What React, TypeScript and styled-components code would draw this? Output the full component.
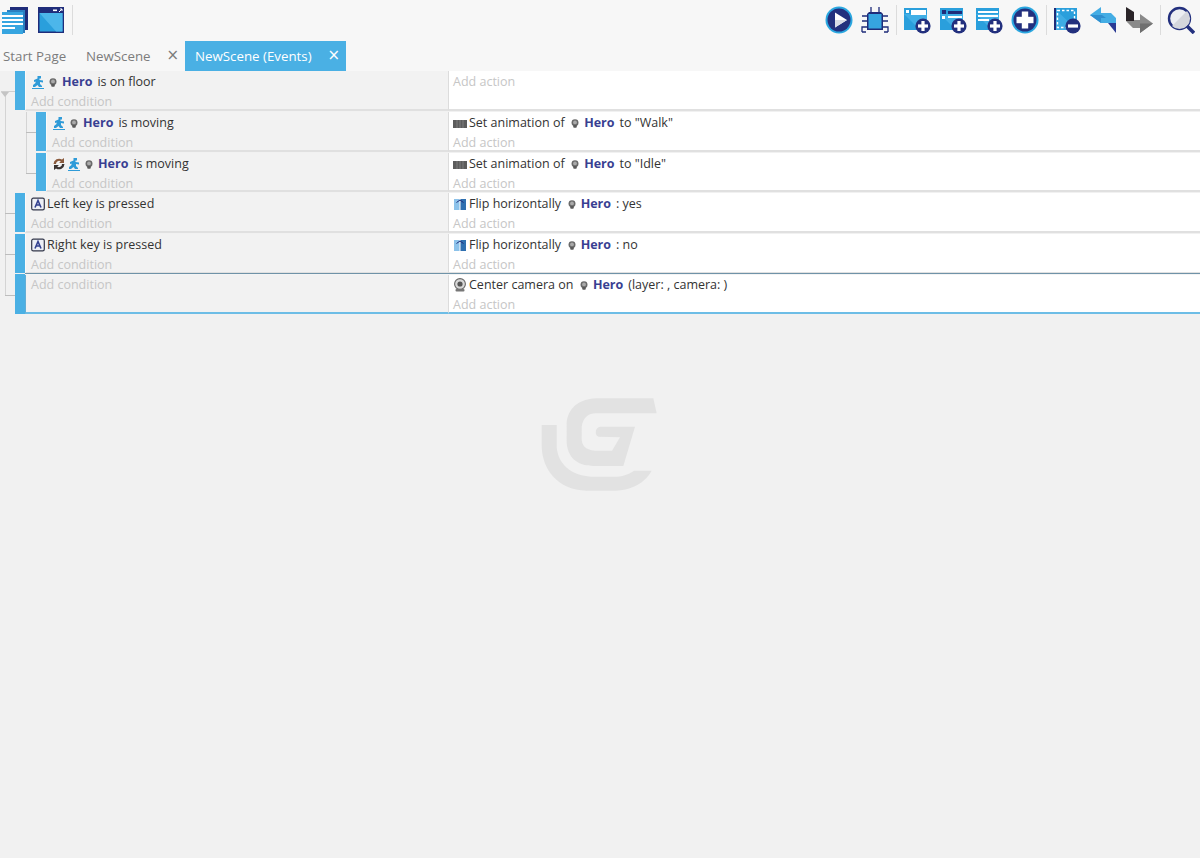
import React from "react";
import styled, { createGlobalStyle } from "styled-components";

const GlobalStyle = createGlobalStyle`
  html, body {
    margin: 0;
    padding: 0;
    background: #f1f1f1;
  }
  body {
    font-family: "Open Sans", "Noto Sans", "Liberation Sans", sans-serif;
    font-size: 12.5px;
    color: #333;
  }
`;

const Page = styled.div`
  position: relative;
  width: 1200px;
  height: 858px;
  overflow: hidden;
  display: flex;
  flex-direction: column;
`;

const Toolbar = styled.div`
  height: 41px;
  flex: none;
  background: #f7f7f7;
  display: flex;
  align-items: center;
  justify-content: space-between;
  padding: 0 5px 1px 1px;
  box-sizing: border-box;
`;

const ToolGroup = styled.div`
  display: flex;
  align-items: center;
  gap: 8px;
`;

const ToolIcon = styled.svg`
  width: 28px;
  height: 28px;
  display: block;
  flex: none;
`;

const ToolSeparator = styled.div`
  width: 1px;
  height: 30px;
  background: #dcdcdc;
  margin: 0 -1.5px;
`;

const TabBar = styled.div`
  height: 30px;
  flex: none;
  display: flex;
  background: #f7f7f7;
`;

const Tab = styled.div<{ $active?: boolean; $width: number }>`
  width: ${({ $width }) => $width}px;
  box-sizing: border-box;
  display: flex;
  align-items: center;
  justify-content: space-between;
  font-size: 13.3px;
  padding: ${({ $active }) => ($active ? "0 6px 0 10px" : "0 6px 0 3px")};
  color: ${({ $active }) => ($active ? "#fff" : "#7c7c7c")};
  background: ${({ $active }) => ($active ? "#4ab0e4" : "transparent")};
`;

const TabClose = styled.span`
  font-size: 15px;
  font-family: "DejaVu Sans", sans-serif;
  line-height: 1;
  margin-top: -2px;
`;

const EventList = styled.div`
  position: relative;
  flex: none;

  &::before {
    content: "";
    position: absolute;
    left: 5px;
    top: 25px;
    height: 199px;
    width: 1px;
    background: #d4d4d4;
  }
`;

const Marker = styled.div`
  position: absolute;
  left: 1px;
  top: 21px;
  width: 0;
  height: 0;
  border-left: 4px solid transparent;
  border-right: 4px solid transparent;
  border-top: 5px solid #c4c4c4;

  &::after {
    content: "";
    position: absolute;
    left: -4px;
    top: -6px;
    width: 14px;
    height: 1px;
    background: #cfcfcf;
  }
`;

const SubEvents = styled.div`
  position: relative;

  &::before {
    content: "";
    position: absolute;
    left: 26px;
    top: 0;
    height: 62px;
    width: 1px;
    background: #d4d4d4;
  }
`;

const Row = styled.div<{ $depth: number; $height: number; $branch?: boolean }>`
  position: relative;
  display: flex;
  height: ${({ $height }) => $height}px;
  padding-left: ${({ $depth }) => 15 + $depth * 21}px;

  &::before {
    content: ${({ $branch }) => ($branch ? '""' : "none")};
    position: absolute;
    left: ${({ $depth }) => ($depth ? 26 : 5)}px;
    top: 20px;
    width: 10px;
    height: 1px;
    background: #bdbdbd;
  }
`;

const Bar = styled.div<{ $selected?: boolean }>`
  width: 10px;
  flex: none;
  background: #4ab0e4;
  margin-bottom: ${({ $selected }) => ($selected ? 1 : 2)}px;
  margin-top: ${({ $selected }) => ($selected ? -1 : 0)}px;
`;

const Cell = styled.div<{ $selected?: boolean }>`
  box-sizing: border-box;
  height: calc(100% - 1px);
  padding: ${({ $selected }) => ($selected ? 0 : 1)}px 0 0 5px;
  line-height: 20px;
  border-bottom: ${({ $selected }) => ($selected ? "2px solid #6dbde6" : "2px solid #e0e0e0")};
  box-shadow: ${({ $selected }) => ($selected ? "0 -1px 0 0 #f4f4f4, 0 -2px 0 0 #6f93a8" : "none")};
`;

const Conditions = styled(Cell)<{ $selected?: boolean }>`
  flex: 1;
  background: #f2f2f2;
  border-left: 1px solid ${({ $selected }) => ($selected ? "#62aed6" : "#fafafa")};
`;

const Actions = styled(Cell)`
  width: 752px;
  flex: none;
  background: #fff;
  border-left: 1px solid #dcdcdc;
  padding-left: 4px;
`;

const Sentence = styled.div`
  display: flex;
  align-items: center;
  height: 20px;
  white-space: pre;
`;

const AddLink = styled.div`
  height: 20px;
  color: #c6c6c6;
`;

const HeroName = styled.b`
  color: #393f92;
  font-weight: 700;
  margin: 0 5px 0 5px;
`;

const SmallIcon = styled.svg<{ $gap?: number }>`
  width: 14px;
  height: 14px;
  flex: none;
  margin-right: ${({ $gap }) => $gap ?? 2}px;
`;

const HeadIcon = styled.svg`
  width: 8px;
  height: 9px;
  flex: none;
`;

const Watermark = styled.svg`
  position: absolute;
  left: 520px;
  top: 380px;
  width: 160px;
  height: 130px;
`;

const PlusBadge = ({ x = 20, y = 20 }: { x?: number; y?: number }) => (
  <g>
    <circle cx={x} cy={y} r="7.6" fill="#23307e" />
    <rect x={x - 5} y={y - 1.6} width="10" height="3.2" fill="#fff" />
    <rect x={x - 1.6} y={y - 5} width="3.2" height="10" fill="#fff" />
  </g>
);

const BlueWindow = ({ children }: { children?: React.ReactNode }) => (
  <g>
    <rect x="1" y="2" width="23" height="22" fill="#2a9fdc" />
    <path d="M1 8 L24 8 L24 24 L17 24 Z" fill="#4cb6ea" opacity="0.7" />
    {children}
  </g>
);

const toolIcons: Record<string, React.ReactNode> = {
  list: (
    <>
      <path d="M9 1 H27 V24 H22 V4 H9 Z" fill="#1f2c7a" />
      <path d="M6 4 H24 V27 H19 V7 H6 Z" fill="#2a7fc0" />
      <rect x="1" y="6" width="21" height="22" fill="#36a5e0" />
      <rect x="1" y="9" width="21" height="2" fill="#fff" />
      <rect x="1" y="13" width="21" height="2" fill="#fff" />
      <rect x="1" y="17" width="21" height="2" fill="#fff" />
      <rect x="1" y="21" width="13" height="2" fill="#fff" />
    </>
  ),
  window: (
    <>
      <rect x="1" y="1" width="26" height="26" fill="#1f2c7a" />
      <rect x="2.5" y="7" width="23" height="18.5" fill="#2a9fdc" />
      <path d="M2.5 7 H25.5 V25.5 H19 Z" fill="#4cb6ea" />
      <rect x="16" y="3.5" width="4" height="1.6" fill="#fff" />
      <path d="M22 6 L25 3 M23 3 H25 V5" stroke="#fff" strokeWidth="1" fill="none" />
    </>
  ),
  play: (
    <>
      <circle cx="14" cy="14" r="13.5" fill="#2aa7e0" />
      <circle cx="14" cy="14" r="11.5" fill="#23307e" />
      <path d="M10 6.5 L22 14 L10 21.5 Z" fill="#fff" />
      <path d="M10 14 L22 14 L10 21.5 Z" fill="#d9dce6" />
    </>
  ),
  chip: (
    <>
      <path
        d="M10 1 V6 M18 1 V6 M1 10 H7 M1 15 H7 M1 26 V21 H7 M21 10 H27 M21 15 H27 M27 26 V21 H21 M5 26 H1 M23 26 H27"
        stroke="#1f2c7a"
        strokeWidth="1.3"
        fill="none"
      />
      <path d="M8 6 H20 L22 8 V24 H6 V8 Z" fill="#1f2c7a" />
      <rect x="7.5" y="8" width="13" height="14.5" fill="#36a5e0" />
    </>
  ),
  addObject: (
    <BlueWindow>
      <rect x="8" y="4" width="15" height="5" fill="#fff" />
      <rect x="3" y="4" width="3" height="3" fill="#fff" />
      <PlusBadge />
    </BlueWindow>
  ),
  addGroup: (
    <BlueWindow>
      <rect x="3" y="4" width="4" height="4" fill="#1f2c7a" />
      <rect x="9" y="5" width="14" height="3" fill="#1f2c7a" />
      <rect x="3" y="10" width="3" height="3" fill="#fff" />
      <rect x="9" y="10" width="14" height="2" fill="#fff" />
      <PlusBadge />
    </BlueWindow>
  ),
  addList: (
    <BlueWindow>
      <rect x="3" y="5" width="20" height="2" fill="#fff" />
      <rect x="3" y="9" width="20" height="2" fill="#fff" />
      <rect x="3" y="13" width="11" height="2" fill="#fff" />
      <PlusBadge />
    </BlueWindow>
  ),
  plus: (
    <>
      <circle cx="14" cy="14" r="13.5" fill="#2aa7e0" />
      <circle cx="14" cy="14" r="11.5" fill="#23307e" />
      <rect x="5.5" y="10.8" width="17" height="6.4" fill="#fff" />
      <rect x="10.8" y="5.5" width="6.4" height="17" fill="#fff" />
    </>
  ),
  remove: (
    <>
      <rect x="1" y="2" width="23" height="22" fill="#2a9fdc" />
      <path d="M1 2 L24 24 H1 Z" fill="#4cb6ea" opacity="0.6" />
      <rect x="4.5" y="4.5" width="17" height="17" fill="none" stroke="#fff" strokeWidth="1.4" strokeDasharray="2.5 2" />
      <rect x="1" y="2" width="2" height="22" fill="#1f2c7a" />
      <circle cx="20" cy="20" r="7.6" fill="#23307e" />
      <rect x="15" y="18.4" width="10" height="3.2" fill="#fff" />
    </>
  ),
  undo: (
    <>
      <path d="M1 9 L12 1 V7 H22 L27 12 V17 H12 Z" fill="#44ade4" />
      <path d="M1 9 L12 17 V12 H17 L13 9 Z" fill="#2f8fd0" />
      <path d="M19 17 H27 V27 Z" fill="#2a3b94" />
    </>
  ),
  redo: (
    <>
      <path d="M1 14 H15 V8 L28 17.5 L15 27 V22 H8 L1 15 Z" fill="#8a8a8a" />
      <path d="M15 17.5 H28 L15 27 Z" fill="#6f6f6f" />
      <path d="M1 1 L9 6 V15 H1 Z" fill="#2a2428" />
    </>
  ),
  search: (
    <>
      <circle cx="12.5" cy="12.5" r="10.5" fill="#eceef2" stroke="#23307e" strokeWidth="2.4" />
      <path d="M5 20 L20 5 A10.4 10.4 0 0 1 5 20 Z" fill="#d4d6dc" />
      <path d="M20 20 L27 27" stroke="#23307e" strokeWidth="3.6" />
    </>
  ),
};

const Tool = ({ name }: { name: string }) => <ToolIcon viewBox="0 0 28 28">{toolIcons[name]}</ToolIcon>;

const Head = () => (
  <HeadIcon viewBox="0 0 8 9">
    <ellipse cx="4" cy="3.7" rx="3.5" ry="3.4" fill="#6a6a6a" />
    <ellipse cx="4" cy="3.4" rx="1.9" ry="1.9" fill="#aaa" />
    <rect x="2.2" y="6" width="3.6" height="2.8" rx="1" fill="#5a5a5a" />
  </HeadIcon>
);

const smallIcons: Record<string, React.ReactNode> = {
  motion: (
    <>
      <path d="M6.5 1 H10 V3.5 H8.5 V5 L12 5.5 V7.5 L9 7 V9 L11 11 V12 H8 L6.5 10 L4 12 H2 V10 L4.5 8 V6.5 L3 7 V5 L6.5 3.5 Z" fill="#2f9bd8" />
      <rect x="1" y="13" width="12" height="1" fill="#2f9bd8" />
    </>
  ),
  invert: (
    <>
      <path d="M1.5 7 A5.5 5.5 0 0 1 10 2.6 L12 1 V6 H7 L8.8 4.5 A3 3 0 0 0 4 7 Z" fill="#8a5a3c" />
      <path d="M12.5 7 A5.5 5.5 0 0 1 4 11.4 L2 13 V8 H7 L5.2 9.5 A3 3 0 0 0 10 7 Z" fill="#3a3230" />
    </>
  ),
  key: (
    <>
      <rect x="0.7" y="1.2" width="12.6" height="11.6" rx="1.6" fill="#eef0f6" stroke="#33374a" strokeWidth="1.2" />
      <path d="M4 10.5 L7 3.5 L10 10.5 M5.2 8 H8.8" stroke="#33408f" strokeWidth="1.6" fill="none" />
    </>
  ),
  film: (
    <>
      <rect x="0" y="4" width="14" height="8" fill="#5c5c5c" />
      <path d="M4 4 V12 M7 4 V12 M10 4 V12" stroke="#7e7e7e" strokeWidth="1" />
    </>
  ),
  flip: (
    <>
      <rect x="1" y="2" width="12" height="11" fill="#8cc2ea" />
      <rect x="7" y="2" width="6" height="11" fill="#2e6fb0" />
      <path d="M7 2 V13" stroke="#fff" strokeWidth="1" />
      <path d="M3.5 5.5 L7 3 L10.5 5.5" stroke="#1f2c7a" strokeWidth="1" fill="none" />
    </>
  ),
  camera: (
    <>
      <circle cx="7" cy="6" r="5.4" fill="#d8d8d8" stroke="#666" strokeWidth="1.1" />
      <circle cx="7" cy="6" r="2.6" fill="#555" />
      <rect x="2.5" y="11" width="9" height="2.6" rx="1" fill="#777" />
    </>
  ),
};

const Small = ({ name, gap }: { name: string; gap?: number }) => (
  <SmallIcon viewBox="0 0 14 14" $gap={gap}>
    {smallIcons[name]}
  </SmallIcon>
);

const Hero = () => (
  <>
    <Head />
    <HeroName>Hero</HeroName>
  </>
);

interface EventData {
  depth: number;
  height: number;
  branch?: boolean;
  selected?: boolean;
  condition?: React.ReactNode;
  action?: React.ReactNode;
}

const moving = (
  <>
    <Small name="motion" gap={4} />
    <Hero />
    is moving
  </>
);

const setAnimation = (value: string) => (
  <>
    <Small name="film" />
    Set animation of{"  "}
    <Hero />
    to "{value}"
  </>
);

const flip = (value: string) => (
  <>
    <Small name="flip" />
    Flip horizontally{"  "}
    <Hero />: {value}
  </>
);

const keyPressed = (key: string) => (
  <>
    <Small name="key" />
    {key} key is pressed
  </>
);

const EventRow = ({ depth, height, branch, selected, condition, action }: EventData) => (
  <Row $depth={depth} $height={height} $branch={branch}>
    <Bar $selected={selected} />
    <Conditions $selected={selected}>
      {condition && <Sentence>{condition}</Sentence>}
      <AddLink>Add condition</AddLink>
    </Conditions>
    <Actions $selected={selected}>
      {action ? <Sentence>{action}</Sentence> : null}
      <AddLink>Add action</AddLink>
    </Actions>
  </Row>
);

const App = () => (
  <Page>
    <GlobalStyle />
    <Toolbar>
      <ToolGroup>
        <Tool name="list" />
        <Tool name="window" />
        <ToolSeparator />
      </ToolGroup>
      <ToolGroup>
        <Tool name="play" />
        <Tool name="chip" />
        <ToolSeparator />
        <Tool name="addObject" />
        <Tool name="addGroup" />
        <Tool name="addList" />
        <Tool name="plus" />
        <ToolSeparator />
        <Tool name="remove" />
        <Tool name="undo" />
        <Tool name="redo" />
        <ToolSeparator />
        <Tool name="search" />
      </ToolGroup>
    </Toolbar>
    <TabBar>
      <Tab $width={83}>Start Page</Tab>
      <Tab $width={102}>
        NewScene
        <TabClose>×</TabClose>
      </Tab>
      <Tab $active $width={161}>
        NewScene (Events)
        <TabClose>×</TabClose>
      </Tab>
    </TabBar>
    <EventList>
      <Marker />
      <EventRow
        depth={0}
        height={41}
        condition={
          <>
            <Small name="motion" gap={4} />
            <Hero />
            is on floor
          </>
        }
      />
      <SubEvents>
        <EventRow depth={1} height={41} branch condition={moving} action={setAnimation("Walk")} />
        <EventRow
          depth={1}
          height={40}
          branch
          condition={
            <>
              <Small name="invert" gap={1} />
              {moving}
            </>
          }
          action={setAnimation("Idle")}
        />
      </SubEvents>
      <EventRow depth={0} height={41} branch condition={keyPressed("Left")} action={flip("yes")} />
      <EventRow depth={0} height={41} branch condition={keyPressed("Right")} action={flip("no")} />
      <EventRow
        depth={0}
        height={40}
        branch
        selected
        action={
          <>
            <Small name="camera" />
            Center camera on{"  "}
            <Hero />
            (layer: , camera: )
          </>
        }
      />
    </EventList>
    <Watermark viewBox="0 0 480 390">
      <path
        d="M400 55 L230 55 C160 58 142 100 140 130 L140 190 C145 240 180 258 220 258 L310 258 L345 140 L240 140 C224 143 224 167 236 170 L300 172 L276 212 L225 212 C195 210 185 195 185 175 L185 140 C190 112 205 100 228 100 L410 100 Z"
        fill="#e2e2e2"
      />
      <path
        d="M65 135 L110 135 L110 200 C115 262 165 290 225 290 L290 290 C315 288 330 280 342 272 L395 272 C370 318 320 332 280 332 L200 332 C110 330 65 265 65 195 Z"
        fill="#e2e2e2"
      />
    </Watermark>
  </Page>
);

export default App;
